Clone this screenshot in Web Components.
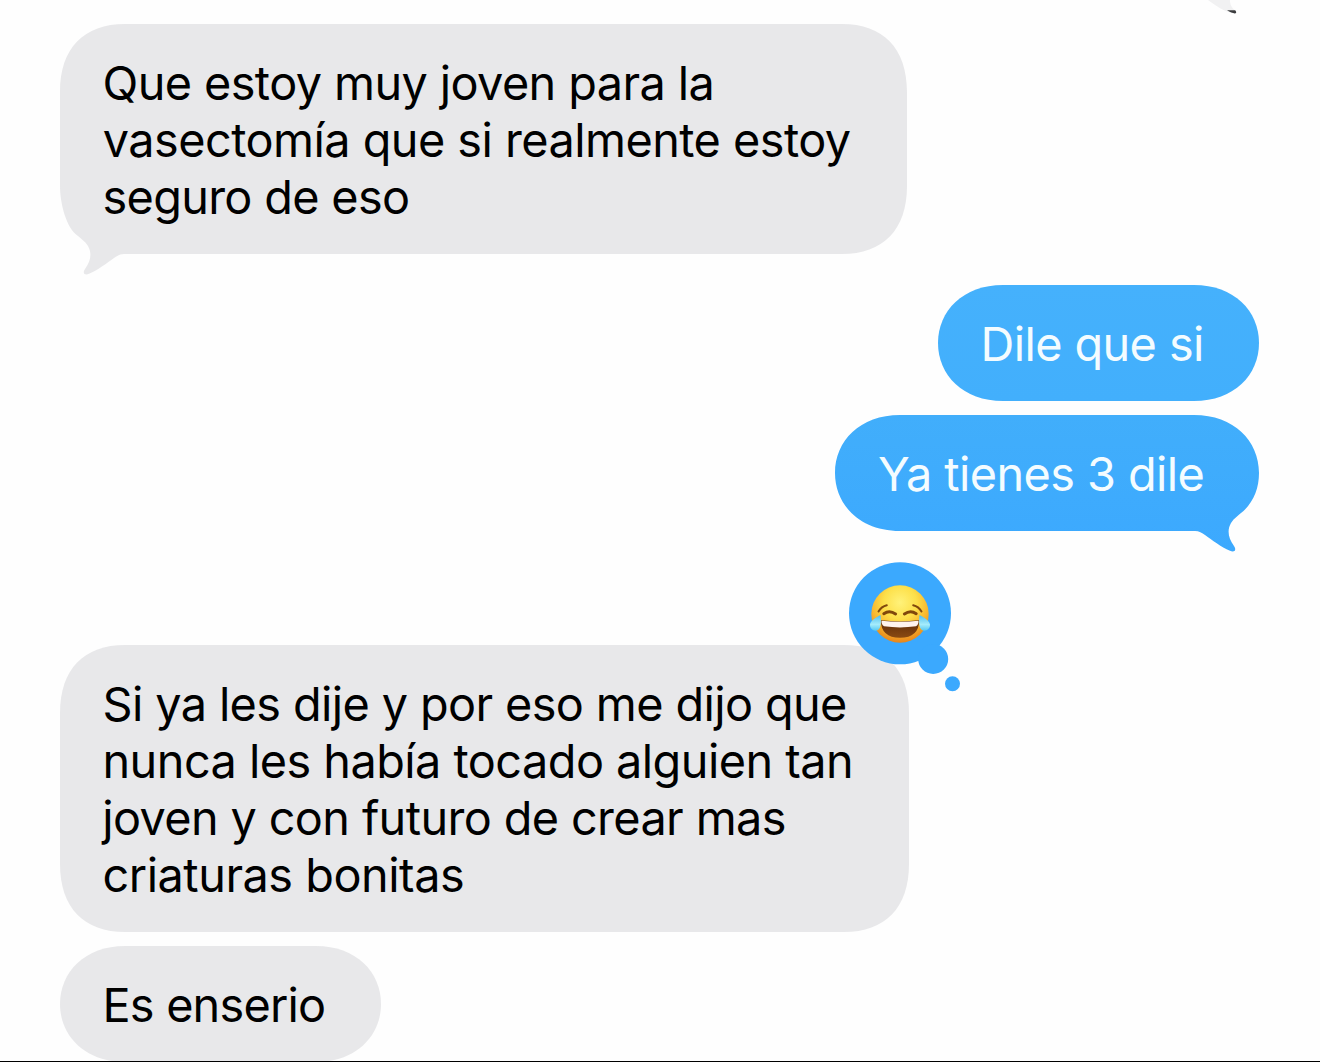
<!DOCTYPE html>
<html lang="es">
<head>
<meta charset="utf-8">
<title>Mensajes</title>
<style>
  body {
    margin: 0;
    background: #fefefe;
    font-family: Inter, "Liberation Sans", sans-serif;
  }
</style>
</head>
<body>
<chat-thread>
  <chat-bubble width="847" tail>
    <chat-line start="1.5" width="607">Que estoy muy joven para la</chat-line>
    <chat-line start="0.8" width="747">vasectomía que si realmente estoy</chat-line>
    <chat-line start="1.5" width="303.5">seguro de eso</chat-line>
  </chat-bubble>
  <chat-bubble width="321" sent style="--top: #45b1fc; --bottom: #42affc; margin-top: 31px">
    <chat-line start="3.5" width="217.5">Dile que si</chat-line>
  </chat-bubble>
  <chat-bubble width="424" sent tail style="--top: #41aefb; --bottom: #3ca9fe; margin-top: 14px">
    <chat-line start="1" width="323.5">Ya tienes 3 dile</chat-line>
  </chat-bubble>
  <chat-bubble width="849" style="margin-top: 114px">
    <chat-line start="1.5" width="740.5">Si ya les dije y por eso me dijo que</chat-line>
    <chat-line start="2.5" width="745.5">nunca les había tocado alguien tan</chat-line>
    <chat-line start="-1.8" width="683.5">joven y con futuro de crear mas</chat-line>
    <chat-line start="1.5" width="358.5">criaturas bonitas</chat-line>
    <tapback-laugh slot="reaction"></tapback-laugh>
  </chat-bubble>
  <chat-bubble width="321" style="margin-top: 14px">
    <chat-line start="3.5" width="217.5">Es enserio</chat-line>
  </chat-bubble>
</chat-thread>

<script>
const FONT_SIZE = 46.8;

class ChatThread extends HTMLElement {
  connectedCallback() {
    this.attachShadow({ mode: 'open' });
    this.shadowRoot.innerHTML = `
      <style>
        :host {
          display: flex;
          flex-direction: column;
          align-items: flex-start;
          position: relative;
          box-sizing: border-box;
          width: 1320px;
          height: 1062px;
          padding: 24px 61px 0 60px;
          overflow: hidden;
          border-bottom: 1px solid #000;
        }
        .previous-tail {
          position: absolute;
          top: 0;
          right: 80px;
        }
      </style>
      <svg class="previous-tail" width="40" height="16" viewBox="0 0 40 16">
        <path d="M8 0C15 5 24 12 33 13C35 13 36.5 12.5 35.5 11C31 7 30 4 30 0Z" fill="#f1f1f2"/>
        <path d="M27 10.3C30 12 33 13.5 35 13.4C36.8 13.2 36.3 11.8 35.2 10.3Z" fill="#3b3c3e"/>
      </svg>
      <slot></slot>
    `;
  }
}

class ChatBubble extends HTMLElement {
  connectedCallback() {
    this.attachShadow({ mode: 'open' });
    this.shadowRoot.innerHTML = `
      <style>
        :host {
          display: block;
          flex: none;
          position: relative;
          box-sizing: border-box;
          padding: 31px 43px 28px;
          color: #000;
          --top: #e8e8ea;
          --bottom: #e8e8ea;
        }
        :host([sent]) {
          align-self: flex-end;
          color: #f4fcff;
        }
        .shape {
          position: absolute;
          left: 0;
          top: 0;
          overflow: visible;
        }
        :host([sent]) .shape {
          transform: scaleX(-1);
        }
        .text {
          position: relative;
        }
      </style>
      <svg class="shape"></svg>
      <div class="text"><slot></slot></div>
      <slot name="reaction"></slot>
    `;
    this.style.width = this.getAttribute('width') + 'px';
    this.drawShape();
  }

  // The tail is drawn bottom left, sent bubbles are mirrored
  drawShape() {
    const w = Number(this.getAttribute('width'));
    const lines = this.querySelectorAll('chat-line').length;
    const h = 59 + lines * 57;
    const ry = Math.min(68, h / 2);
    // control points: a for the sides, b for the top and bottom
    const a = lines === 1 ? 26 : 24;
    const b = lines === 1 ? 25 : 24;
    const corner = this.hasAttribute('tail')
      ? `H64C60 ${h} 57 ${h + 2} 54 ${h + 4}C47 ${h + 9} 38 ${h + 16} 29 ${h + 19.8}
         C25 ${h + 21.5} 22 ${h + 19.5} 25 ${h + 15}C31 ${h + 7} 32 ${h - 1} 28 ${h - 8}
         C25 ${h - 13} 20 ${h - 16} 15.5 ${h - 20}C5 ${h - 30} 0 ${h - ry + 15} 0 ${h - ry}`
      : `H65C${b} ${h} 0 ${h - a} 0 ${h - ry}`;
    const svg = this.shadowRoot.querySelector('.shape');
    svg.setAttribute('width', w);
    svg.setAttribute('height', h);
    svg.innerHTML = `
      <defs>
        <linearGradient id="fill" x1="0" y1="0" x2="0" y2="1">
          <stop offset="0" style="stop-color: var(--top)"/>
          <stop offset="1" style="stop-color: var(--bottom)"/>
        </linearGradient>
      </defs>
      <path fill="url(#fill)" d="M0 ${ry}C0 ${a} ${b} 0 65 0H${w - 65}C${w - b} 0 ${w} ${a} ${w} ${ry}
        V${h - ry}C${w} ${h - a} ${w - b} ${h} ${w - 65} ${h}${corner}Z"/>
    `;
  }
}

// One line of text, tracked so that its ink fills the given width
class ChatLine extends HTMLElement {
  connectedCallback() {
    this.attachShadow({ mode: 'open' });
    const text = this.textContent;
    const ctx = document.createElement('canvas').getContext('2d');
    ctx.font = `${FONT_SIZE}px Inter, "Liberation Sans", sans-serif`;
    const m = ctx.measureText(text);
    const ink = m.actualBoundingBoxLeft + m.actualBoundingBoxRight;
    const spacing = (Number(this.getAttribute('width')) - ink) / (text.length - 1);
    const indent = Number(this.getAttribute('start')) + m.actualBoundingBoxLeft;
    this.shadowRoot.innerHTML = `
      <style>
        :host {
          display: block;
          height: 57px;
          line-height: 57px;
          font-size: ${FONT_SIZE}px;
          letter-spacing: ${spacing}px;
          text-indent: ${indent}px;
          white-space: nowrap;
        }
      </style>
      <slot></slot>
    `;
  }
}

class TapbackLaugh extends HTMLElement {
  connectedCallback() {
    this.attachShadow({ mode: 'open' });
    this.shadowRoot.innerHTML = `
      <style>
        :host {
          display: block;
          position: absolute;
          top: -83px;
          right: -52px;
          width: 112px;
          height: 130px;
        }
        svg {
          display: block;
        }
      </style>
      <svg width="112" height="130" viewBox="849 562 112 130">
        <defs>
          <radialGradient id="face" cx=".5" cy=".3" r=".72">
            <stop offset="0" stop-color="#fff27a"/>
            <stop offset=".4" stop-color="#fde04a"/>
            <stop offset=".7" stop-color="#f8b52c"/>
            <stop offset="1" stop-color="#e5801a"/>
          </radialGradient>
          <linearGradient id="mouth" x1="0" y1="0" x2="0" y2="1">
            <stop offset="0" stop-color="#5e2c0a"/>
            <stop offset="1" stop-color="#8a4a12"/>
          </linearGradient>
          <linearGradient id="tear" x1="0" y1="0" x2="0" y2="1">
            <stop offset="0" stop-color="#4fbdec"/>
            <stop offset=".6" stop-color="#a5ecfc"/>
            <stop offset="1" stop-color="#55c8f2"/>
          </linearGradient>
        </defs>
        <g fill="#3ba9fe">
          <circle cx="900" cy="613.3" r="51"/>
          <circle cx="933.2" cy="659" r="15"/>
          <circle cx="952.5" cy="683.8" r="7.5"/>
        </g>
        <g transform="translate(865 578)">
          <circle cx="35" cy="36" r="28.7" fill="url(#face)"/>
          <g fill="none" stroke="#80480c" stroke-linecap="round">
            <path d="M13.5 33.5Q16.5 28.5 21.8 27.3" stroke-width="2"/>
            <path d="M56.5 33.5Q53.5 28.5 48.2 27.3" stroke-width="2"/>
            <path d="M18.8 35.7Q24.5 31.7 30.6 36" stroke-width="3"/>
            <path d="M51.2 35.7Q45.5 31.7 39.4 36" stroke-width="3"/>
          </g>
          <path d="M15.8 42.3Q35 44.5 54.2 42.3Q54 59.8 35 59.8Q16 59.8 15.8 42.3Z" fill="url(#mouth)"/>
          <path d="M16.5 42.7Q35 44.7 53.5 42.7Q54 46 51 48.3Q35 50.5 19 48.3Q16 46 16.5 42.7Z" fill="#fff4ee"/>
          <path d="M15.5 37C9 40.5 5 43.5 5 47C5 50.5 8 53 11 52.7C16 52.3 16.5 45 15.5 37Z" fill="url(#tear)"/>
          <path d="M54.5 37C61 40.5 65 43.5 65 47C65 50.5 62 53 59 52.7C54 52.3 53.5 45 54.5 37Z" fill="url(#tear)"/>
        </g>
      </svg>
    `;
  }
}

customElements.define('chat-thread', ChatThread);
customElements.define('chat-bubble', ChatBubble);
customElements.define('chat-line', ChatLine);
customElements.define('tapback-laugh', TapbackLaugh);
</script>
</body>
</html>
